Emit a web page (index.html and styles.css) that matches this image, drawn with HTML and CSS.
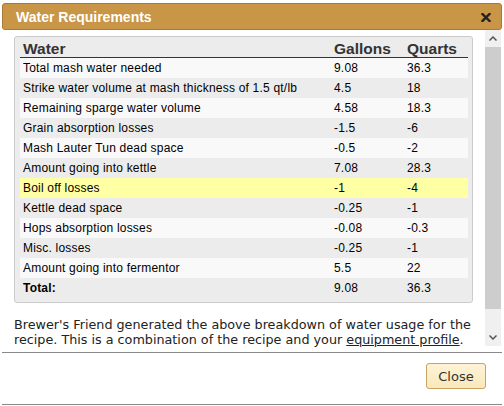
FILE: index.html
```html
<!DOCTYPE html>
<html>
<head>
<meta charset="utf-8">
<link rel="stylesheet" href="styles.css">
</head>
<body>
<div class="dialog">
  <div class="titlebar">
    <span class="title">Water Requirements</span>
    <svg class="x" width="10" height="9" viewBox="0 0 10 9"><path d="M1.5 1 L8.5 8 M8.5 1 L1.5 8" stroke="#222" stroke-width="2.4" stroke-linecap="square"/></svg>
  </div>
  <div class="body">
    <div class="content">
      <div class="box">
        <table class="water">
          <thead>
            <tr><th class="c1">Water</th><th class="c2">Gallons</th><th class="c3">Quarts</th></tr>
          </thead>
          <tbody>
            <tr class="odd"><td>Total mash water needed</td><td>9.08</td><td>36.3</td></tr>
            <tr><td>Strike water volume at mash thickness of 1.5 qt/lb</td><td>4.5</td><td>18</td></tr>
            <tr class="odd"><td>Remaining sparge water volume</td><td>4.58</td><td>18.3</td></tr>
            <tr><td>Grain absorption losses</td><td>-1.5</td><td>-6</td></tr>
            <tr class="odd"><td>Mash Lauter Tun dead space</td><td>-0.5</td><td>-2</td></tr>
            <tr><td>Amount going into kettle</td><td>7.08</td><td>28.3</td></tr>
            <tr class="hl"><td>Boil off losses</td><td>-1</td><td>-4</td></tr>
            <tr><td>Kettle dead space</td><td>-0.25</td><td>-1</td></tr>
            <tr class="odd"><td>Hops absorption losses</td><td>-0.08</td><td>-0.3</td></tr>
            <tr><td>Misc. losses</td><td>-0.25</td><td>-1</td></tr>
            <tr class="odd"><td>Amount going into fermentor</td><td>5.5</td><td>22</td></tr>
            <tr class="total"><td>Total:</td><td>9.08</td><td>36.3</td></tr>
          </tbody>
        </table>
      </div>
      <p class="note">Brewer's Friend generated the above breakdown of water usage for the recipe. This is a combination of the recipe and your <a href="#">equipment profile</a>.</p>
    </div>
    <div class="scrollbar">
      <div class="sb-btn"><svg width="8" height="5" viewBox="0 0 8 5"><path d="M0.5 4.5 L4 1 L7.5 4.5" fill="none" stroke="#555" stroke-width="1.5"/></svg></div>
      <div class="sb-thumb"></div>
      <div class="sb-track"></div>
      <div class="sb-btn"><svg width="8" height="5" viewBox="0 0 8 5"><path d="M0.5 0.5 L4 4 L7.5 0.5" fill="none" stroke="#555" stroke-width="1.5"/></svg></div>
    </div>
  </div>
  <div class="footer">
    <button class="close">Close</button>
  </div>
</div>
</body>
</html>
```
FILE: styles.css
```css
html, body {
  margin: 0;
  padding: 0;
  background: #fff;
}
.dialog {
  width: 500px;
  margin: 3px 0 0 2px;
}
.titlebar {
  height: 25px;
  background: #c99546;
  border: 1px solid #a97a34;
  border-radius: 3px;
  display: flex;
  align-items: center;
  justify-content: space-between;
  padding: 0 10px 0 13px;
}
.title {
  font-family: "Liberation Sans", Arial, sans-serif;
  font-weight: bold;
  font-size: 14px;
  color: #fff;
}
.x { display: block; margin-top: 1px; }
.body {
  display: flex;
  height: 317px;
}
.content {
  flex: 1;
  overflow: hidden;
  padding: 6px 12px 0 12px;
}
.box {
  background: #ececec;
  border: 1px solid #cbcbcb;
  border-radius: 3px;
  padding: 4px 5px 4px 5px;
}
.water {
  width: 448px;
  border-collapse: collapse;
  font-family: "Liberation Sans", Arial, sans-serif;
  font-size: 12px;
  letter-spacing: 0.2px;
  color: #000;
}
.water th {
  font-size: 15.5px;
  letter-spacing: 0;
  font-weight: bold;
  color: #333;
  text-align: left;
  height: 16px;
  padding: 0 3px;
  line-height: 16px;
  border-bottom: 1px solid #333;
}
.water th.c1 { width: 305px; }
.water th.c2 { width: 67px; }
.water td {
  height: 20px;
  padding: 0 3px;
  line-height: 20px;
}
.water tr.odd td { background: #f9f9f9; }
.water tr.hl td { background: #ffffa4; }
.water tr.total td:first-child { font-weight: bold; }
.note {
  margin: 14px 0 0 0;
  font-family: "DejaVu Sans", Verdana, sans-serif;
  font-size: 12.75px;
  line-height: 15px;
  color: #222;
}
.note a { color: #222; text-decoration: underline; }
.scrollbar {
  width: 16px;
  margin-right: 1px;
  display: flex;
  flex-direction: column;
  height: 316px;
  background: #f0f0f0;
}
.sb-btn {
  height: 17px;
  display: flex;
  align-items: center;
  justify-content: center;
}
.sb-thumb {
  height: 262px;
  background: #cdcdcd;
}
.sb-track { flex: 1; }
.footer {
  border-top: 1px solid #8a8a8a;
  border-bottom: 1px solid #8a8a8a;
  margin-top: 5px;
  height: 51px;
  display: flex;
  justify-content: flex-end;
  align-items: flex-start;
  padding-right: 16px;
}
.close {
  margin-top: 10px;
  width: 60px;
  height: 26px;
  background: linear-gradient(#fdf3d6, #fbe8bb);
  border: 1px solid #c7a462;
  border-radius: 3px;
  font-family: "DejaVu Sans", Verdana, sans-serif;
  font-size: 13px;
  color: #333;
  padding: 0;
}
```
